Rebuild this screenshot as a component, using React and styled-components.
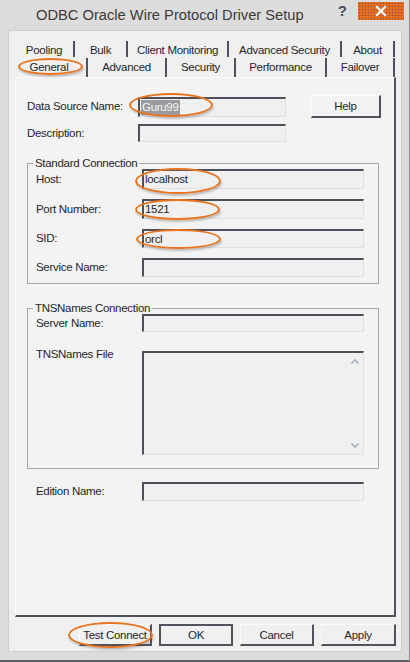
import React from "react";
import styled, { createGlobalStyle } from "styled-components";

const FONT = `"Liberation Sans", Arial, sans-serif`;

const GlobalStyle = createGlobalStyle`
  html, body { margin: 0; padding: 0; background: #dcdcdc; }
  body { width: 410px; height: 662px; overflow: hidden; }
`;

const App = () => {
  return (
    <>
      <GlobalStyle />
      <Window>
        <TitleBar>
          <Title>ODBC Oracle Wire Protocol Driver Setup</Title>
          <HelpGlyph>?</HelpGlyph>
          <CloseButton>
            <svg width="12" height="12" viewBox="0 0 12 12">
              <path d="M2 2 L10 10 M10 2 L2 10" stroke="#fff" strokeWidth="2.2" strokeLinecap="square" />
            </svg>
          </CloseButton>
        </TitleBar>

        <Client>
          <TabRow $h={18}>
            <Tab $w={60} $inset>Pooling</Tab>
            <Tab $w={53} $inset>Bulk</Tab>
            <Tab $w={101} $inset>Client Monitoring</Tab>
            <Tab $w={113} $inset>Advanced Security</Tab>
            <Tab $w={53} $inset>About</Tab>
          </TabRow>
          <TabRow $h={19}>
            <Tab $w={73} $pad={3}>
              General
              <Mark $l={3} $t={0} $w={65} $h={17} />
            </Tab>
            <Tab $w={79}>Advanced</Tab>
            <Tab $w={69}>Security</Tab>
            <Tab $w={91}>Performance</Tab>
            <Tab $w={68}>Failover</Tab>
          </TabRow>

          <Panel>
            <Row $h={23}>
              <Label $w={111}>Data Source Name:</Label>
              <Input $w={148} $h={20}>
                <Selected>Guru99</Selected>
                <Mark $l={-11} $t={-6} $w={84} $h={24} />
              </Input>
              <HelpButton>Help</HelpButton>
            </Row>
            <Row $h={18} $gap={6}>
              <Label $w={111}>Description:</Label>
              <Input $w={148} $h={18} />
            </Row>

            <GroupBox $gap={21} $bottom={6}>
              <Legend>Standard Connection</Legend>
              <Row $h={20}>
                <Label $w={106}>Host:</Label>
                <Input $w={222}>
                  localhost
                  <Mark $l={-9} $t={-3} $w={86} $h={26} />
                </Input>
              </Row>
              <Row $h={20} $gap={10}>
                <Label $w={106}>Port Number:</Label>
                <Input $w={222}>
                  1521
                  <Mark $l={-9} $t={-2} $w={85} $h={21} />
                </Input>
              </Row>
              <Row $h={19} $gap={10}>
                <Label $w={106}>SID:</Label>
                <Input $w={222}>
                  orcl
                  <Mark $l={-8} $t={-2} $w={85} $h={20} />
                </Input>
              </Row>
              <Row $h={19} $gap={10}>
                <Label $w={106}>Service Name:</Label>
                <Input $w={222} />
              </Row>
            </GroupBox>

            <GroupBox $gap={24} $bottom={13}>
              <Legend>TNSNames Connection</Legend>
              <Row $h={18}>
                <Label $w={106}>Server Name:</Label>
                <Input $w={222} />
              </Row>
              <Row $h={104} $gap={19} $top>
                <FileLabel $w={106}>TNSNames File</FileLabel>
                <TextArea>
                  <ScrollTrack>
                    <svg width="8" height="5" viewBox="0 0 8 5">
                      <path d="M0.5 4.5 L4 1 L7.5 4.5" fill="none" stroke="#a9b3bb" strokeWidth="1.6" />
                    </svg>
                    <svg width="8" height="5" viewBox="0 0 8 5">
                      <path d="M0.5 0.5 L4 4 L7.5 0.5" fill="none" stroke="#a9b3bb" strokeWidth="1.6" />
                    </svg>
                  </ScrollTrack>
                </TextArea>
              </Row>
            </GroupBox>

            <Row $h={19} $gap={13} $indent={9}>
              <Label $w={106}>Edition Name:</Label>
              <Input $w={222} />
            </Row>
          </Panel>

          <ButtonBar>
            <DialogButton $w={73}>
              Test Connect
              <Mark $l={-12} $t={-3} $w={85} $h={26} />
            </DialogButton>
            <DialogButton $w={74} $default>OK</DialogButton>
            <DialogButton $w={74}>Cancel</DialogButton>
            <DialogButton $w={75}>Apply</DialogButton>
          </ButtonBar>
        </Client>
      </Window>
    </>
  );
};

export default App;

const Window = styled.div`
  width: 410px;
  height: 662px;
  box-sizing: border-box;
  display: flex;
  flex-direction: column;
  background: #dcdcdc;
  border-right: 1px solid #8c8c92;
  border-bottom: 2px solid #5f5f66;
  font-family: ${FONT};
  font-size: 11.5px;
  letter-spacing: -0.3px;
  color: #262628;
`;

const TitleBar = styled.div`
  height: 30px;
  display: flex;
  align-items: flex-start;
`;

const Title = styled.div`
  flex: 1;
  padding-left: 36px;
  line-height: 30px;
  font-size: 14.7px;
  letter-spacing: 0;
  color: #3a3a3a;
`;

const HelpGlyph = styled.div`
  font-weight: bold;
  font-size: 15px;
  letter-spacing: 0;
  line-height: 22px;
  color: #4a4a58;
  margin-right: 11px;
`;

const CloseButton = styled.div`
  width: 46px;
  height: 18px;
  margin-top: 2px;
  margin-right: 5px;
  display: flex;
  align-items: center;
  justify-content: center;
  background-color: #e8701e;
  background-image: radial-gradient(circle, rgba(70, 50, 90, 0.5) 0.7px, transparent 1.1px);
  background-size: 3px 3px;
`;

const Client = styled.div`
  width: 394px;
  height: 622px;
  box-sizing: border-box;
  margin: 0 7px 8px 8px;
  padding: 10px 6px 6px 7px;
  background: #f0f0f0;
  box-shadow: inset 0 0 0 1px #cdcdd2;
  display: flex;
  flex-direction: column;
`;

const TabRow = styled.div`
  height: ${(p) => p.$h}px;
  display: flex;
`;

const Tab = styled.div`
  position: relative;
  width: ${(p) => p.$w}px;
  box-sizing: border-box;
  margin: ${(p) => (p.$inset ? "1px 0" : "0")};
  padding-top: ${(p) => (p.$inset ? 2 : 0)}px;
  border-right: 2px solid #4f515c;
  display: flex;
  align-items: center;
  justify-content: center;
  padding-right: ${(p) => p.$pad || 0}px;
  line-height: 15px;
  white-space: nowrap;
`;

const Mark = styled.span`
  position: absolute;
  left: ${(p) => p.$l}px;
  top: ${(p) => p.$t}px;
  width: ${(p) => p.$w}px;
  height: ${(p) => p.$h}px;
  box-sizing: border-box;
  border: 2px solid #e8741f;
  border-radius: 50%;
  box-shadow: 1px 2px 2px rgba(70, 70, 70, 0.3);
  pointer-events: none;
`;

const Panel = styled.div`
  width: 381px;
  height: 540px;
  box-sizing: border-box;
  background: #f3f3f3;
  border-top: 1px solid #fbfbfb;
  border-left: 1px solid #fbfbfb;
  border-right: 2px solid #50525c;
  border-bottom: 2px solid #50525c;
  padding: 17px 0 0 11px;
  display: flex;
  flex-direction: column;
`;

const Row = styled.div`
  height: ${(p) => p.$h}px;
  margin-top: ${(p) => p.$gap || 0}px;
  padding-left: ${(p) => p.$indent || 0}px;
  display: flex;
  align-items: ${(p) => (p.$top ? "flex-start" : "center")};
`;

const Label = styled.div`
  width: ${(p) => p.$w}px;
  flex-shrink: 0;
  line-height: 15px;
  white-space: nowrap;
`;

const FileLabel = styled(Label)`
  margin-top: -4px;
`;

const Input = styled.div`
  position: relative;
  width: ${(p) => p.$w}px;
  height: ${(p) => (p.$h ? `${p.$h}px` : "100%")};
  box-sizing: border-box;
  border-top: 2px solid #4f4f5c;
  border-left: 2px solid #4f4f5c;
  border-right: 1px solid #e0e0e3;
  border-bottom: 1px solid #e0e0e3;
  background: #f0f0f0;
  padding-left: 1px;
  display: flex;
  align-items: center;
  line-height: 15px;
  white-space: nowrap;
`;

const Selected = styled.span`
  background: #9b9b9f;
  color: #f4f4f4;
  padding: 0 1px;
  line-height: 15px;
`;

const TextArea = styled.div`
  width: 222px;
  height: 100%;
  box-sizing: border-box;
  border-top: 2px solid #4f4f5c;
  border-left: 2px solid #4f4f5c;
  border-right: 1px solid #e0e0e3;
  border-bottom: 1px solid #e0e0e3;
  background: #f0f0f0;
  display: flex;
  justify-content: flex-end;
`;

const ScrollTrack = styled.div`
  width: 16px;
  box-sizing: border-box;
  padding: 6px 0 6px;
  display: flex;
  flex-direction: column;
  align-items: center;
  justify-content: space-between;
`;

const GroupBox = styled.div`
  width: 352px;
  box-sizing: border-box;
  margin-top: ${(p) => p.$gap}px;
  border: 1px solid #a6a6ab;
  padding: 0 14px ${(p) => p.$bottom}px 8px;
  display: flex;
  flex-direction: column;
`;

const Legend = styled.div`
  width: fit-content;
  height: 14px;
  line-height: 14px;
  margin: -8px 0 -1px -3px;
  padding: 0 2px;
  background: #f3f3f3;
  white-space: nowrap;
`;

const HelpButton = styled.div`
  width: 70px;
  height: 23px;
  box-sizing: border-box;
  margin-left: 25px;
  border-top: 1px solid #fafafa;
  border-left: 1px solid #fafafa;
  border-right: 2px solid #50525c;
  border-bottom: 2px solid #50525c;
  display: flex;
  align-items: center;
  justify-content: center;
`;

const ButtonBar = styled.div`
  margin-top: 7px;
  height: 22px;
  display: flex;
  justify-content: flex-end;
  gap: 7px;
`;

const DialogButton = styled.div`
  position: relative;
  width: ${(p) => p.$w}px;
  height: 22px;
  box-sizing: border-box;
  border-top: ${(p) => (p.$default ? "2px solid #50525c" : "1px solid #fafafa")};
  border-left: ${(p) => (p.$default ? "2px solid #50525c" : "1px solid #fafafa")};
  border-right: 2px solid #50525c;
  border-bottom: 2px solid #50525c;
  background: #f0f0f0;
  display: flex;
  align-items: center;
  justify-content: center;
  white-space: nowrap;
`;
